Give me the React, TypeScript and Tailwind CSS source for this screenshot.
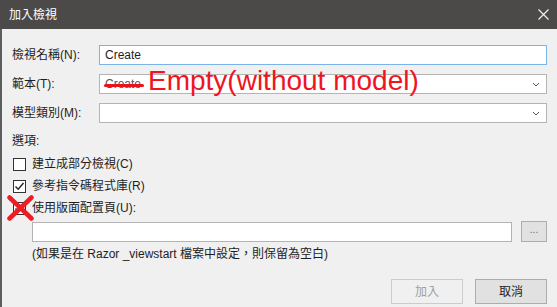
import {FC, ReactNode} from 'react'

const font = {fontFamily: '"Liberation Sans", "Noto Sans CJK TC", sans-serif'}

const Chevron: FC = () => (
  <svg width="8" height="5" viewBox="0 0 8 5" className="shrink-0">
    <path d="M1 1 L4 4 L7 1" stroke="#555" strokeWidth="1" fill="none"/>
  </svg>
)

const Field: FC<{label: string, focused?: boolean, select?: boolean, children?: ReactNode}> = ({label, focused, select, children}) => (
  <div className="flex items-center h-[20px]">
    <div className="w-[87px] text-[12px] text-[#1e1e1e]">{label}</div>
    <div className={`relative flex-1 h-[20px] bg-white border flex items-center pl-[5px] pr-[6px] ${focused ? 'border-[#7ab4ea]' : 'border-[#b4b4b4]'}`}>
      <div className="flex-1 text-[12px] text-[#1e1e1e]">{children}</div>
      {select && <Chevron/>}
    </div>
  </div>
)

const Check: FC<{checked?: boolean, label: string}> = ({checked, label}) => (
  <div className="flex items-center h-[20px] gap-[6px] pl-[1px]">
    <div className="w-[13px] h-[13px] bg-white border border-[#333] flex items-center justify-center">
      {checked && (
        <svg width="11" height="11" viewBox="0 0 11 11">
          <path d="M1.5 5.5 L4.2 8.3 L9.5 2" stroke="#222" strokeWidth="1.4" fill="none"/>
        </svg>
      )}
    </div>
    <span className="text-[12px] text-[#1e1e1e]">{label}</span>
  </div>
)

export default function App() {
  return (
    <div className="w-[557px] h-[307px] flex flex-col bg-[#f0f0f0] overflow-hidden" style={font}>
      <div className="h-[29px] bg-[#4b4a48] flex items-center justify-between pl-[9px] pr-[8px] shrink-0">
        <span className="text-[12px] text-white">加入檢視</span>
        <svg width="11" height="11" viewBox="0 0 11 11">
          <path d="M0.5 0.5 L10.5 10.5 M10.5 0.5 L0.5 10.5" stroke="#f0f0f0" strokeWidth="1.2"/>
        </svg>
      </div>
      <div className="flex-1 flex flex-col border-l-2 border-[#5d5d5d] pl-[10px] pr-[10px] pt-[16px]">
        <Field label="檢視名稱(N):" focused>Create</Field>
        <div className="mt-[9px] relative">
          <Field label="範本(T):" select>
            <span className="relative text-[#555]">
              Create
              <span className="absolute left-[-1px] right-[-3px] top-[7px] h-[3px] rounded-full bg-[#e8141c]"/>
            </span>
          </Field>
          <span className="absolute left-[136px] top-[-13px] text-[28px] leading-[40px] text-[#f0141e] whitespace-nowrap">Empty(without model)</span>
        </div>
        <div className="mt-[9px]">
          <Field label="模型類別(M):" select/>
        </div>
        <div className="mt-[10px] text-[12px] leading-[16px] text-[#1e1e1e]">選項:</div>
        <div className="mt-[5px] flex flex-col gap-[2px]">
          <Check label="建立成部分檢視(C)"/>
          <Check checked label="參考指令碼程式庫(R)"/>
          <div className="relative">
            <Check checked label="使用版面配置頁(U):"/>
            <svg className="absolute left-[-5px] top-[-3px]" width="27" height="26" viewBox="0 0 27 26">
              <path d="M2.5 2.5 L24.5 23.5 M24.5 2.5 L2.5 23.5" stroke="#ee1c25" strokeWidth="4.5" strokeLinecap="round"/>
            </svg>
          </div>
        </div>
        <div className="mt-[3px] pl-[20px] flex items-center gap-[9px]">
          <div className="flex-1 h-[20px] bg-white border border-[#b4b4b4]"/>
          <div className="w-[26px] h-[21px] bg-[#e1e1e1] border border-[#adadad] flex items-center justify-center text-[10px] text-[#666] leading-none pb-[3px]">...</div>
        </div>
        <div className="mt-[4px] pl-[20px] text-[12px] leading-[16px] text-[#1e1e1e]">(如果是在 Razor _viewstart 檔案中設定，則保留為空白)</div>
        <div className="mt-[17px] flex justify-end gap-[12px]">
          <div className="w-[72px] h-[25px] border border-[#cccccc] bg-[#f0f0f0] flex items-center justify-center text-[12px] text-[#a0a0a0]">加入</div>
          <div className="w-[72px] h-[25px] border border-[#adadad] bg-[#e1e1e1] flex items-center justify-center text-[12px] text-[#1e1e1e]">取消</div>
        </div>
      </div>
    </div>
  )
}
